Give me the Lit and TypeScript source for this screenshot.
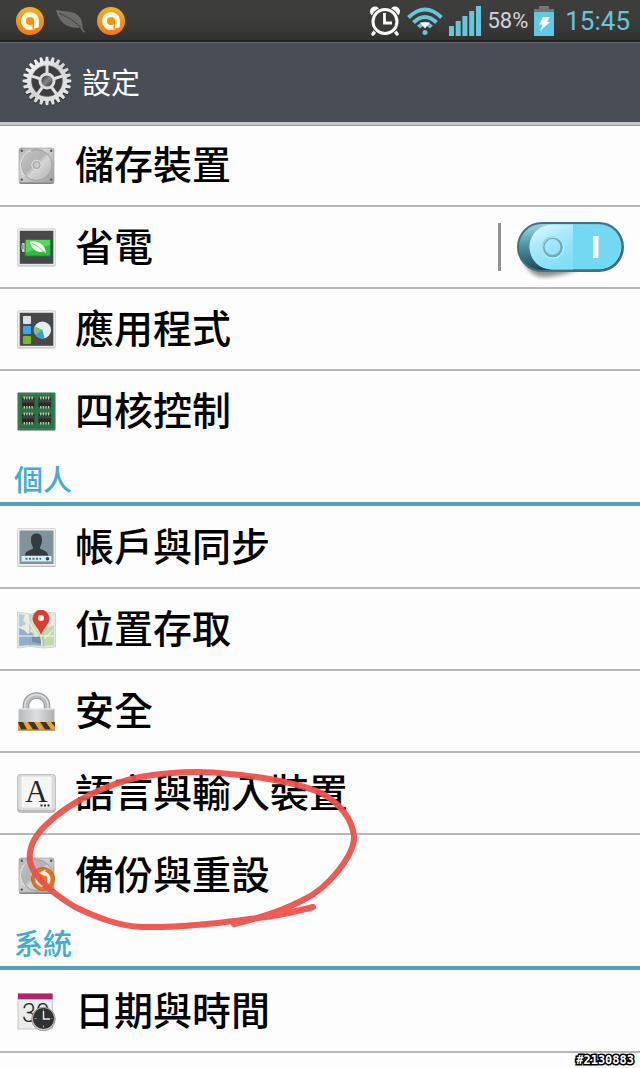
import { LitElement, html, svg, css, nothing } from "lit";
import type { TemplateResult } from "lit";
import { customElement, property, state } from "lit/decorators.js";

const gearPath = (() => {
  const teeth = 24;
  const points: string[] = [];
  const step = (Math.PI * 2) / teeth;
  const at = (r: number, a: number) =>
    `${(25 + r * Math.sin(a)).toFixed(2)},${(25 - r * Math.cos(a)).toFixed(2)}`;
  for (let i = 0; i < teeth; i++) {
    const a = i * step;
    points.push(
      at(20, a - step * 0.36),
      at(24.4, a - step * 0.2),
      at(24.4, a + step * 0.2),
      at(20, a + step * 0.36)
    );
  }
  return `M${points.join("L")}Z`;
})();

const disk = svg`
  <defs>
    <linearGradient id="metal" x1="0" y1="0" x2="1" y2="1">
      <stop offset="0" stop-color="#b4b4b4"/><stop offset=".4" stop-color="#d2d2d2"/><stop offset="1" stop-color="#9c9c9c"/>
    </linearGradient>
    <linearGradient id="plate" x1="0" y1="0" x2="1" y2="1">
      <stop offset="0" stop-color="#c4c4c4"/><stop offset=".45" stop-color="#b2b2b2"/><stop offset=".55" stop-color="#d6d6d6"/><stop offset="1" stop-color="#b0b0b0"/>
    </linearGradient>
  </defs>
  <rect x="2" y="3" width="35" height="35" rx="2" fill="#858585"/>
  <rect x="2" y="2" width="35" height="34.500" rx="2" fill="url(#metal)" stroke="#999" stroke-width=".6"/>
  <circle cx="19.500" cy="19" r="15.500" fill="url(#plate)" stroke="#979797" stroke-width=".8"/>
  <path d="M8 30A15.500 15.500 0 0 1 14 4.500" fill="none" stroke="#eee" stroke-width="1"/>
  <circle cx="19.500" cy="19" r="4.800" fill="#bdbdbd" stroke="#e2e2e2"/>
  <circle cx="19.500" cy="19" r="3.300" fill="#c9c9c9" stroke="#9b9b9b" stroke-width=".7"/>
  <g fill="#555"><circle cx="4.800" cy="4.800" r="1.200"/><circle cx="34.200" cy="4.800" r="1.200"/><circle cx="4.800" cy="33.600" r="1.200"/><circle cx="34.200" cy="33.600" r="1.200"/></g>`;

const darkTile = svg`
  <rect x=".5" y="1" width="38" height="37.500" rx="1.500" fill="#bcbcbc"/>
  <rect x=".5" y=".5" width="38" height="37" rx="1.500" fill="#e9e9e9" stroke="#d0d0d0" stroke-width=".6"/>
  <rect x="2.800" y="2.800" width="33.500" height="33" fill="#47484a"/>`;

const chip = (x: number, y: number) => svg`
  <g transform="translate(${x} ${y})">
    <rect x="0" y="2" width="12.500" height="9.500" rx="1" fill="#262a28"/>
    <rect x="0" y="4" width="12.500" height="2.500" fill="#414643"/>
    <path d="M2.300 .5V3.500M4.900 .5V3.500M7.500 .5V3.500M10.100 .5V3.500M2.300 10V12.500M4.900 10V12.500M7.500 10V12.500M10.100 10V12.500" stroke="#d2cfa6" stroke-width="1.300"/>
  </g>`;

const icons: Record<string, TemplateResult> = {
  storage: disk,
  power: svg`${darkTile}
    <rect x="5" y="15" width="4" height="9" rx="1" fill="#d5d5d5"/>
    <rect x="4" y="16.500" width="2.500" height="5" fill="#8f8f8f"/>
    <rect x="7.500" y="11" width="26.500" height="17.500" rx="1.500" fill="#178a2b"/>
    <rect x="8.500" y="12" width="24.500" height="15.500" rx="1" fill="#2fbb3f"/>
    <path d="M9 12H33V17Q20 20 9 25Z" fill="#53d75c"/>
    <path d="M13 13.500C20 13 27 15 28.500 22.500L29 25L26.500 23.500C19 25.500 14 20 13 13.500Z" fill="#f0fbe9"/>
    <path d="M15 15Q21 18 28 24.500" stroke="#6cc46d" stroke-width=".8" fill="none"/>`,
  apps: svg`${darkTile}
    <rect x="6" y="6" width="8" height="8" rx="1" fill="#dce0e2"/>
    <rect x="6" y="16" width="8" height="8" rx="1" fill="#38a7ec"/>
    <rect x="6" y="26" width="8" height="8" rx="1" fill="#77bd1f"/>
    <circle cx="25.500" cy="20" r="8.600" fill="#e6edf0"/>
    <path d="M25.500 20L17.500 16.500A8.600 8.600 0 0 0 27.500 28.300Z" fill="#2f9fe0"/>
    <path d="M25.500 20L17.500 16.500A8.600 8.600 0 0 0 18.500 25Z" fill="#7cc576"/>`,
  cores: svg`
    <rect x=".5" y=".5" width="38" height="38" rx="1" fill="#2c7148"/>
    <rect x="2" y="2" width="35" height="35" fill="none" stroke="#579370" stroke-width=".6"/>
    ${chip(5, 4)}${chip(21.5, 4)}${chip(5, 20)}${chip(21.5, 20)}`,
  account: svg`
    <rect x=".5" y="1" width="38" height="38" rx="1" fill="#bbb"/>
    <rect x=".5" y=".5" width="38" height="37.500" rx="1" fill="#f0f0f0" stroke="#c8c8c8" stroke-width=".6"/>
    <rect x="2.500" y="2.500" width="34" height="33.500" fill="#80929b"/>
    <path d="M8 27.500C8 23 13 22.500 16 20.500C16.500 19 14 17 14 12C14 7.500 16 5.500 19.500 5.500S25 7.500 25 12C25 17 22.500 19 23 20.500C26 22.500 31 23 31 27.500Z" fill="#343c41"/>
    <rect x="4.500" y="28" width="30" height="5.500" fill="#d7f0f6"/>
    <path d="M8.500 30.800H24" stroke="#526b75" stroke-width="2" stroke-dasharray="2 1.500"/>
    <circle cx="30.500" cy="30.800" r="1.800" fill="#334b55"/>`,
  location: svg`
    <path d="M.5 2L13 4L26 2L38.500 3V37L26 38L13 36.500L.5 38Z" fill="#e9eae3" stroke="#c6c6bf" stroke-width=".7"/>
    <path d="M2 18L7 20L11 24L15 22L18 27L24 29V36L13 35L2 36Z" fill="#8fb0cf"/>
    <path d="M2 4L8 5L6 10L9 14L4 17L2 16Z" fill="#b5c9db"/>
    <path d="M14 5L25 4L30 18L24 30L17 25L14 18Z" fill="#d6dbb5"/>
    <path d="M25 27L30 18L37 15V35L26 36Z" fill="#bfdcae"/>
    <path d="M15 25L19 27L23 25L24 34L15 32Z" fill="#7391a0"/>
    <path d="M13 4V36M26 3V37" stroke="#9e9f92" stroke-width=".7"/>
    <path d="M2 26H37M8 5L20 25M27 29L36 20" stroke="#f7f7ed" stroke-width="1"/>
    <path d="M24 24C22 18 16 14 16 8.500A8 8.500 0 0 1 32 8.500C32 14 26 18 24 24Z" fill="#e23a2c" stroke="#b82a20" stroke-width=".6"/>
    <circle cx="24" cy="8" r="3" fill="#fff0ea"/>`,
  security: svg`
    <defs><linearGradient id="lock" x1="0" x2="1"><stop stop-color="#b6b8ba"/><stop offset=".5" stop-color="#dcdedf"/><stop offset="1" stop-color="#aeb0b2"/></linearGradient></defs>
    <path d="M9 18V13.500A10.500 10 0 0 1 30 13.500V18" fill="none" stroke="#888b8d" stroke-width="6.500"/>
    <path d="M9 18V13.500A10.500 10 0 0 1 30 13.500V18" fill="none" stroke="#b9bcbe" stroke-width="5"/>
    <path d="M8 17V13.500A11.500 10.800 0 0 1 31 13.500V17" fill="none" stroke="#e3e5e6" stroke-width="1.200"/>
    <rect x="1.500" y="16.500" width="36" height="14.500" rx="1" fill="url(#lock)"/>
    <path d="M2 17H37" stroke="#eef0f0"/>
    <rect x="1" y="30" width="37" height="8.500" rx="1" fill="#e9a42d"/>
    <path d="M1 30H6L10 37.500H4ZM11 30H17L22 37.500H16ZM23 30H29L34 37.500H28ZM34 30H38V35Z" fill="#3c352c"/>
    <path d="M1 38H38" stroke="#7d6848" stroke-width=".8"/>`,
  language: svg`
    <rect x=".5" y=".5" width="38" height="38" rx="3" fill="#bdbdbd" stroke="#aaa" stroke-width=".6"/>
    <rect x="1" y="1" width="37" height="35" rx="3" fill="#dcdcdc"/>
    <rect x="4.500" y="2.500" width="30" height="31" rx="2" fill="#f6f6f6"/>
    <text x="19.500" y="28" text-anchor="middle" font-family="'Liberation Serif', serif" font-size="31" fill="#252525">A</text>
    <g fill="#222"><rect x="23.500" y="30.500" width="2" height="2"/><rect x="27" y="30.500" width="2" height="2"/><rect x="30.500" y="30.500" width="2" height="2"/></g>`,
  backup: svg`${disk}
    <circle cx="26" cy="23" r="11.500" fill="#d9772b" stroke="#c2651f"/>
    <path d="M20.500 20A6.200 6.200 0 1 0 27 17" fill="none" stroke="#f7efe8" stroke-width="3"/>
    <path d="M22 17L28.500 13.500V20.500Z" fill="#f7efe8"/>`,
  date: svg`
    <rect x="1" y="2" width="34.500" height="35" fill="#ececec" stroke="#bdbdbd" stroke-width=".8"/>
    <rect x="1" y="1.500" width="34.500" height="6" fill="#b8206b"/>
    <path d="M1 8.200H35.500" stroke="#fff"/>
    <text x="5" y="30" font-family="Roboto, sans-serif" font-size="25" font-weight="300" fill="#222">30</text>
    <circle cx="26.500" cy="27" r="11.800" fill="#c9c9c9" stroke="#818181" stroke-width=".7"/>
    <circle cx="26.500" cy="26.500" r="10.600" fill="#303132"/>
    <path d="M26.500 19V27H33" stroke="#eee" stroke-width="1.400" fill="none"/>
    <path d="M17.500 26.500H19.500M26.500 35.500V33.500M26.500 17.500V18.500M35.500 26.500H34.500" stroke="#aaa" stroke-width="1"/>`,
};

interface Entry { icon: string; label: string; toggle?: boolean }
interface Group { title?: string; entries: Entry[] }

const groups: Group[] = [
  {
    entries: [
      { icon: "storage", label: "儲存裝置" },
      { icon: "power", label: "省電", toggle: true },
      { icon: "apps", label: "應用程式" },
      { icon: "cores", label: "四核控制" },
    ],
  },
  {
    title: "個人",
    entries: [
      { icon: "account", label: "帳戶與同步" },
      { icon: "location", label: "位置存取" },
      { icon: "security", label: "安全" },
      { icon: "language", label: "語言與輸入裝置" },
      { icon: "backup", label: "備份與重設" },
    ],
  },
  { title: "系統", entries: [{ icon: "date", label: "日期與時間" }] },
];

@customElement("status-bar")
export class StatusBar extends LitElement {
  static styles = css`
    :host {
      display: flex;
      align-items: center;
      justify-content: space-between;
      height: 42px;
      box-sizing: border-box;
      padding: 2px 10px 0 16px;
      border-bottom: 2px solid #202123;
      background: linear-gradient(#3e3f3d, #3b3c3a 55%, #303130);
      font-family: Roboto, sans-serif;
    }
    .side { display: flex; align-items: center; }
    .notices { gap: 12px; }
    .system { gap: 6px; }
    svg { display: block; }
    .percent { font-size: 22px; line-height: 26px; color: #d5d5d5; }
    .clock { margin-left: 5px; font-size: 26px; line-height: 30px; color: #67c5dc; }
  `;

  private badge(id: string) {
    return html`<svg width="28" height="28" viewBox="0 0 28 28" aria-hidden="true">
      <defs><linearGradient id=${id} x2="0" y2="1"><stop stop-color="#efb226"/><stop offset="1" stop-color="#f27b0c"/></linearGradient></defs>
      <circle cx="14" cy="14" r="14" fill="url(#${id})"/>
      <circle cx="14" cy="14" r="6.600" fill="none" stroke="#fff7df" stroke-width="5"/>
      <rect x="18" y="14" width="5" height="7" rx="2" fill="#fff7df"/>
      <path d="M17.300 14V22" stroke="#f28a13" stroke-width="1.500"/>
    </svg>`;
  }

  render() {
    return html`
      <div class="side notices">
        ${this.badge("one")}
        <svg width="29" height="24" viewBox="0 0 29 24" aria-hidden="true">
          <path d="M0 1C9 3 20 1 25 10C27 14 26 17 27 20L29 23L27.500 23.500L24 18.500C12 20 3 14 0 1Z" fill="#6b6c6a"/>
          <path d="M3 4Q15 9 25 18" stroke="#444543" stroke-width="1" fill="none"/>
        </svg>
        ${this.badge("two")}
      </div>
      <div class="side system">
        <svg width="32" height="32" viewBox="0 0 32 32" aria-label="鬧鐘" role="img">
          <circle cx="6" cy="6.500" r="5" fill="#fff"/><circle cx="26" cy="6.500" r="5" fill="#fff"/>
          <path d="M7 25L4 29M25 25L28 29" stroke="#fff" stroke-width="3.500" stroke-linecap="round"/>
          <circle cx="16" cy="16.500" r="14.500" fill="#393a38"/>
          <circle cx="16" cy="16.500" r="12" fill="none" stroke="#fff" stroke-width="3"/>
          <path d="M15.500 8V18H23" fill="none" stroke="#fff" stroke-width="2.800"/>
        </svg>
        <svg width="36" height="28" viewBox="0 0 36 28" aria-label="Wi-Fi" role="img">
          <g fill="none" stroke="#67c5dc" stroke-width="4">
            <path d="M1.500 10.500Q18 -5.500 34.500 10.500"/><path d="M6.500 15.500Q18 4.500 29.500 15.500"/><path d="M11.500 20Q18 13.500 24.500 20"/>
          </g>
          <path d="M13 15.500H23L18 21.500Z" fill="#fff"/><circle cx="18" cy="25.500" r="2.500" fill="#67c5dc"/>
        </svg>
        <svg width="32" height="30" viewBox="0 0 32 30" aria-label="訊號" role="img" fill="#67c5dc">
          <rect y="20" width="5" height="10"/><rect x="6.700" y="15" width="5" height="15"/><rect x="13.400" y="10" width="5" height="20"/><rect x="20.200" y="5" width="5" height="25"/><rect x="27" width="5" height="30"/>
        </svg>
        <span class="percent">58%</span>
        <svg width="20" height="30" viewBox="0 0 20 30" aria-label="電池" role="img">
          <path d="M5 0H15V3H20V8H0V3H5Z" fill="#747574"/><rect y="6" width="20" height="24" fill="#60c9e5"/>
          <path d="M9 11H16L13 16H16L6 25L8.500 18.500H5Z" fill="#fff"/>
        </svg>
        <span class="clock">15:45</span>
      </div>`;
  }
}

@customElement("setting-row")
export class SettingRow extends LitElement {
  @property() icon = "";
  @property() label = "";
  @property({ type: Boolean }) toggle = false;
  @property({ type: Boolean }) last = false;
  @state() private on = true;

  static styles = css`
    :host { display: block; }
    .row {
      display: flex;
      align-items: center;
      box-sizing: border-box;
      height: 82px;
      padding-right: 16px;
      border-bottom: 2px solid #b5b7b9;
    }
    .row.last { height: 80px; border-bottom: 0; }
    .link {
      display: flex;
      flex: 1;
      align-items: center;
      gap: 19px;
      padding-left: 17px;
      color: #000;
      text-decoration: none;
      font: 500 39px/56px "Noto Sans CJK TC", sans-serif;
    }
    .label { padding-bottom: 6px; }
    .icon { flex: none; display: block; }
    .switch {
      display: grid;
      padding-left: 16px;
      border-left: 3px solid #929292;
      cursor: pointer;
    }
    .switch input { grid-area: 1 / 1; margin: 0; opacity: 0; width: 107px; height: 48px; }
    .switch svg { grid-area: 1 / 1; display: block; overflow: visible; pointer-events: none; }
  `;

  render() {
    return html`<div class="row ${this.last ? "last" : ""}">
      <a class="link" href="#${this.icon}">
        <svg class="icon" width="39" height="39" viewBox="0 0 39 39" aria-hidden="true">${icons[this.icon]}</svg>
        <span class="label">${this.label}</span>
      </a>
      ${this.toggle
        ? html`<label class="switch">
            <input type="checkbox" role="switch" aria-label=${this.label} .checked=${this.on}
              @change=${(e: Event) => (this.on = (e.target as HTMLInputElement).checked)} />
            <svg width="107" height="48" viewBox="0 1 107 48" aria-hidden="true">
              <defs>
                <linearGradient id="well" x1="0" y1="0" x2=".3" y2="1"><stop stop-color="#a9e2f1"/><stop offset=".45" stop-color="#4c93a8"/><stop offset="1" stop-color="#173f4b"/></linearGradient>
                <linearGradient id="knob" x1="0" y1="0" x2=".5" y2="1"><stop stop-color="#e9faff"/><stop offset=".5" stop-color="#a5e8fb"/><stop offset="1" stop-color="#83dff6"/></linearGradient>
                <filter id="soft" x="-20%" y="-50%" width="140%" height="200%"><feGaussianBlur stdDeviation="2"/></filter>
              </defs>
              <path d="M6 38Q12 54 26 55Q42 55 62 47Z" fill="#555" opacity=".65" filter="url(#soft)"/>
              <rect x="1" y="1" width="105" height="48" rx="24" fill="url(#well)" stroke="#42727f" stroke-width="2"/>
              <path d="M35 2.500H82A22 22 0 0 1 82 47.500H35A22 22 0 0 1 35 2.500Z" fill=${this.on ? "#73d8f1" : "#a9b1b4"}/>
              <path d="M35 2.500H56V47.500H35A22 22 0 0 1 35 2.500Z" fill="url(#knob)"/>
              <circle cx="35.500" cy="25" r="9.200" fill="none" stroke="#6daebd" stroke-width="2.600"/>
              <circle cx="36" cy="25.700" r="10.500" fill="none" stroke="#d2f6ff" stroke-width=".8"/>
              <rect x="76" y="14" width="5.500" height="22" fill="#fff"/>
            </svg>
          </label>`
        : nothing}
    </div>`;
  }
}

@customElement("app-root")
export class AppRoot extends LitElement {
  static styles = css`
    :host {
      display: block;
      position: relative;
      min-height: 100vh;
      background: #fdfdfd;
      font-family: "Noto Sans CJK TC", sans-serif;
    }
    .bar {
      display: flex;
      align-items: center;
      gap: 10px;
      height: 83px;
      box-sizing: border-box;
      padding: 0 0 3px 22px;
      background: #494d55;
      border-top: 1px solid #66696d;
      border-bottom: 3px solid #c6c7ca;
      box-shadow: 0 1px 0 #97989b;
    }
    .bar svg { display: block; }
    h1 { margin: 0; font-size: 29px; line-height: 42px; font-weight: 400; color: #fff; }
    h2 {
      box-sizing: border-box;
      height: 55px;
      margin: 0 0 1px;
      padding: 5px 0 0 14px;
      border-bottom: 4px solid #559fb8;
      font-size: 29px;
      line-height: 44px;
      font-weight: 500;
      color: #42acd0;
    }
    .group { position: relative; }
    .mark { position: absolute; left: 20px; bottom: -20px; pointer-events: none; }
    .stamp {
      position: absolute;
      right: 6px;
      bottom: 0;
      font: 700 12px/15px "DejaVu Sans Mono", monospace;
      color: #fff;
      paint-order: stroke;
      -webkit-text-stroke: 3px #000;
    }
  `;

  render() {
    return html`
      <status-bar></status-bar>
      <header class="bar">
        <svg width="50" height="50" viewBox="0 0 50 50" aria-hidden="true">
          <defs>
            <linearGradient id="gear" x1="0" y1="0" x2="1" y2="1"><stop stop-color="#fff"/><stop offset=".5" stop-color="#d4d4d4"/><stop offset="1" stop-color="#eee"/></linearGradient>
            <linearGradient id="hub" x1="0" y1="0" x2="1" y2="1"><stop stop-color="#333"/><stop offset=".5" stop-color="#858585"/><stop offset="1" stop-color="#333"/></linearGradient>
          </defs>
          <path d=${gearPath} transform="translate(0 1)" fill="#292b2f"/>
          <path d=${gearPath} fill="url(#gear)"/>
          <circle cx="25" cy="25" r="15.500" fill="#3b3d40" stroke="#6b6b6b" stroke-width=".6"/>
          ${[0, 72, 144, 216, 288].map(
            (a) => svg`<path d="M25 17V9" stroke="#e1e1e1" stroke-width="3" transform="rotate(${a} 25 25)"/>`
          )}
          <circle cx="25" cy="25" r="8.500" fill="#dedede"/>
          <circle cx="25" cy="25" r="5.600" fill="url(#hub)"/>
        </svg>
        <h1>設定</h1>
      </header>
      <main>
        ${groups.map(
          (g, gi) => html`<section class="group">
            ${g.title ? html`<h2>${g.title}</h2>` : nothing}
            ${g.entries.map(
              (e, i) => html`<setting-row .icon=${e.icon} .label=${e.label} .toggle=${!!e.toggle}
                .last=${i === g.entries.length - 1 && gi < groups.length - 1}></setting-row>`
            )}
            ${gi === 1
              ? html`<svg class="mark" width="340" height="170" viewBox="20 765 340 170" aria-hidden="true"
                  fill="none" stroke="#ef5047" stroke-opacity=".94" stroke-width="6" stroke-linecap="round" stroke-linejoin="round">
                  <path d="M234 924Q277 914 303 900C329 888 355 854 354 836C352 819 340 803 321 793C301 784 265 777 230 774C197 770 164 773 140 777C105 784 66 805 47 824C34 836 28 848 30 862C34 878 52 893 75 907C98 918 119 926 142 927C184 928 226 922 266 917Q287 914 313 907"/>
                </svg>`
              : nothing}
          </section>`
        )}
      </main>
      <span class="stamp">#2130883</span>`;
  }
}
